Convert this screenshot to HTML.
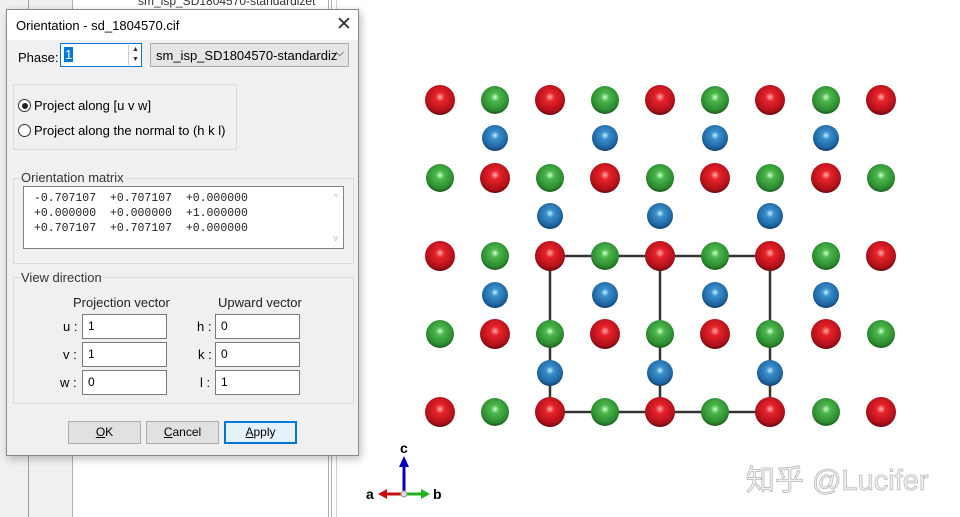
<!DOCTYPE html>
<html><head><meta charset="utf-8"><style>
body{margin:0;width:960px;height:517px;overflow:hidden;background:#fff;font-family:"Liberation Sans","Noto Sans CJK SC",sans-serif;font-size:12px;color:#000;position:relative}
.abs{position:absolute}
.inp{position:absolute;background:#fff;border:1px solid #7a7a7a;box-sizing:border-box;padding:0 5px;line-height:23px;font-size:12px}
.btn{position:absolute;background:#e1e1e1;border:1px solid #adadad;box-sizing:border-box;text-align:center;line-height:20px;font-size:12px}
.grp{position:absolute;border:1px solid #dcdcdc;box-sizing:border-box}
</style></head><body>
<div class="abs" style="left:0;top:0;width:28px;height:517px;background:#f0f0f0"></div>
<div class="abs" style="left:28px;top:0;width:1px;height:517px;background:#a0a0a0"></div>
<div class="abs" style="left:29px;top:0;width:43px;height:517px;background:#f0f0f0"></div>
<div class="abs" style="left:72px;top:0;width:1px;height:517px;background:#b0b0b0"></div>
<div class="abs" style="left:73px;top:0;width:256px;height:517px;background:#fff"></div>
<div class="abs" style="left:328px;top:0;width:1px;height:517px;background:#b0b0b0"></div>
<div class="abs" style="left:331px;top:0;width:1px;height:517px;background:#b0b0b0"></div>
<div class="abs" style="left:336px;top:0;width:1px;height:517px;background:#d0d0d0"></div>
<div class="abs" style="left:138px;top:-6px;font-size:12px;color:#333">sm_isp_SD1804570-standardizet</div>
<div class="abs" style="left:6px;top:9px;width:353px;height:447px;background:#f0f0f0;border:1px solid #888;box-sizing:border-box;box-shadow:2px 3px 8px rgba(0,0,0,.25)">
 <div class="abs" style="left:0;top:0;width:351px;height:30px;background:#fff"></div>
 <div class="abs" style="left:9px;top:8px;font-size:13px">Orientation - sd_1804570.cif</div>
 <div class="abs" style="left:329px;top:3px;font-size:19px;color:#333">✕</div>
 <div class="abs" style="left:11px;top:40px;font-size:13px">Phase:</div>
 <div class="inp" style="left:53px;top:33px;width:82px;height:24px;border-color:#0078d7;padding:0"></div>
 <div class="abs" style="left:57px;top:37px;background:#0078d7;color:#fff;font-size:13px;padding:0 1px">1</div>
 <div class="abs" style="left:121px;top:35px;width:13px;height:20px;border-left:1px solid #ccc;font-size:7px;line-height:10px;text-align:center;color:#333">▲<br>▼</div>
 <div class="abs" style="left:143px;top:33px;width:199px;height:24px;background:#e5e5e5;border:1px solid #adadad;box-sizing:border-box;font-size:13px;padding:4px 0 0 5px">sm_isp_SD1804570-standardiz<span style="position:absolute;right:4px;top:3px;font-size:11px">⌵</span></div>
 <div class="grp" style="left:6px;top:74px;width:224px;height:66px"></div>
 <div class="abs" style="left:11px;top:89px;width:11px;height:11px;border:1px solid #333;border-radius:50%;background:#fff"><div style="margin:2.5px;width:6px;height:6px;border-radius:50%;background:#222"></div></div>
 <div class="abs" style="left:27px;top:88px;font-size:13px">Project along [u v w]</div>
 <div class="abs" style="left:11px;top:114px;width:11px;height:11px;border:1px solid #333;border-radius:50%;background:#fff"></div>
 <div class="abs" style="left:27px;top:113px;font-size:13px">Project along the normal to (h k l)</div>
 <div class="grp" style="left:6px;top:168px;width:341px;height:86px"></div>
 <div class="abs" style="left:13px;top:160px;font-size:13px;background:#f0f0f0;padding:0 1px;color:#333">Orientation matrix</div>
 <div class="abs" style="left:16px;top:176px;width:321px;height:63px;background:#fff;border:1px solid #828282;box-sizing:border-box;font-family:'Liberation Mono',monospace;font-size:11.5px;line-height:15px;padding:4px 0 0 10px;white-space:pre;color:#222">-0.707107  +0.707107  +0.000000
+0.000000  +0.000000  +1.000000
+0.707107  +0.707107  +0.000000<span style="position:absolute;right:5px;top:3px;font-size:9px;color:#bbb;font-family:sans-serif">^</span><span style="position:absolute;right:5px;top:44px;font-size:9px;color:#bbb;font-family:sans-serif">v</span></div>
 <div class="grp" style="left:6px;top:267px;width:341px;height:127px"></div>
 <div class="abs" style="left:13px;top:260px;font-size:13px;background:#f0f0f0;padding:0 1px;color:#333">View direction</div>
 <div class="abs" style="left:66px;top:285px;font-size:13px;color:#222">Projection vector</div>
 <div class="abs" style="left:211px;top:285px;font-size:13px;color:#222">Upward vector</div>
 <div class="abs" style="left:56px;top:309px;font-size:13px">u :</div>
 <div class="abs" style="left:56px;top:337px;font-size:13px">v :</div>
 <div class="abs" style="left:53px;top:365px;font-size:13px">w :</div>
 <div class="abs" style="left:190px;top:309px;font-size:13px">h :</div>
 <div class="abs" style="left:191px;top:337px;font-size:13px">k :</div>
 <div class="abs" style="left:193px;top:365px;font-size:13px">l :</div>
 <div class="inp" style="left:75px;top:304px;width:85px;height:25px">1</div>
 <div class="inp" style="left:75px;top:332px;width:85px;height:25px">1</div>
 <div class="inp" style="left:75px;top:360px;width:85px;height:25px">0</div>
 <div class="inp" style="left:208px;top:304px;width:85px;height:25px">0</div>
 <div class="inp" style="left:208px;top:332px;width:85px;height:25px">0</div>
 <div class="inp" style="left:208px;top:360px;width:85px;height:25px">1</div>
 <div class="btn" style="left:61px;top:411px;width:73px;height:23px"><u>O</u>K</div>
 <div class="btn" style="left:139px;top:411px;width:73px;height:23px"><u>C</u>ancel</div>
 <div class="btn" style="left:217px;top:411px;width:73px;height:23px;border:2px solid #0078d7;background:#e5f1fb;line-height:19px"><u>A</u>pply</div>
</div>
<svg class="abs" style="left:0;top:0" width="960" height="517">
<defs>
<radialGradient id="r" cx=".5" cy=".4" r=".6"><stop offset="0" stop-color="#ffb0b0"/><stop offset=".25" stop-color="#e8222a"/><stop offset=".8" stop-color="#b0101a"/><stop offset="1" stop-color="#6a0a10"/></radialGradient>
<radialGradient id="g" cx=".5" cy=".4" r=".6"><stop offset="0" stop-color="#d0ffd0"/><stop offset=".25" stop-color="#4cb84c"/><stop offset=".8" stop-color="#2c8a30"/><stop offset="1" stop-color="#1a5a1c"/></radialGradient>
<radialGradient id="b" cx=".5" cy=".4" r=".6"><stop offset="0" stop-color="#c8f0ff"/><stop offset=".25" stop-color="#3a90cc"/><stop offset=".8" stop-color="#1e64a0"/><stop offset="1" stop-color="#123e68"/></radialGradient>
</defs>
<g stroke="#333" stroke-width="2.5" fill="none"><rect x="550" y="256" width="220" height="156"/><line x1="660" y1="256" x2="660" y2="412"/></g>
<g id="atoms"></g>
<line x1="404" y1="494" x2="404" y2="465" stroke="#0000c0" stroke-width="3"/><polygon points="399,467 409,467 404,456" fill="#0000c0"/>
<line x1="404" y1="494" x2="385" y2="494" stroke="#c01010" stroke-width="3"/><polygon points="387,489 387,499 378,494" fill="#c01010"/>
<line x1="404" y1="494" x2="423" y2="494" stroke="#20b020" stroke-width="3"/><polygon points="421,489 421,499 430,494" fill="#20b020"/>
<circle cx="404" cy="494" r="3" fill="#ddd" stroke="#999"/>
<text x="400" y="453" font-family="Liberation Sans" font-weight="bold" font-size="14">c</text>
<text x="366" y="499" font-family="Liberation Sans" font-weight="bold" font-size="14">a</text>
<text x="433" y="499" font-family="Liberation Sans" font-weight="bold" font-size="14">b</text>
<text x="746" y="490" font-family="'Liberation Sans','Noto Sans CJK SC',sans-serif" font-size="29" fill="#f4f4f4" stroke="#b8b8b8" stroke-width="0.8">知乎 @Lucifer</text>
</svg>
<script>
var xs=[440,495,550,605,660,715,770,826,881],ys=[100,178,256,334,412],s='';
ys.forEach(function(y,ri){xs.forEach(function(x,ci){var red=(ci+ri)%2==0;s+='<circle cx="'+x+'" cy="'+y+'" r="'+(red?15:14)+'" fill="url(#'+(red?'r':'g')+')"/>';});});
[[138,[1,3,5,7]],[216,[2,4,6]],[295,[1,3,5,7]],[373,[2,4,6]]].forEach(function(a){a[1].forEach(function(c){s+='<circle cx="'+xs[c]+'" cy="'+a[0]+'" r="13" fill="url(#b)"/>';});});
document.getElementById('atoms').innerHTML=s;
</script>
</body></html>
